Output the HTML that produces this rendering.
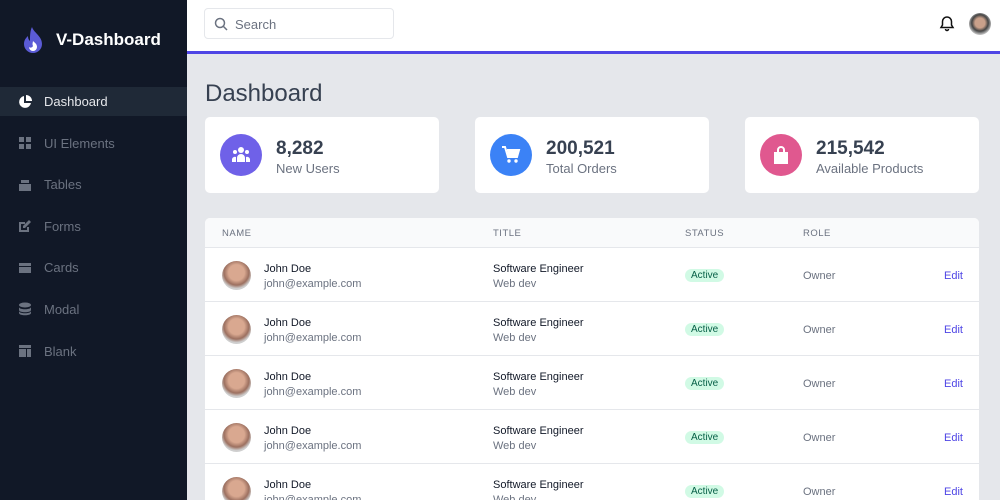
<!DOCTYPE html>
<html><head><meta charset="utf-8"><style>
*{box-sizing:border-box;margin:0;padding:0}
html,body{width:1000px;height:500px;overflow:hidden}
body{font-family:"Liberation Sans",sans-serif;background:#e5e7eb;position:relative}
.side{position:absolute;left:0;top:0;width:187px;height:500px;background:#111827}
.logo{position:absolute;left:22px;top:27px;display:flex;align-items:center}
.logo span{color:#fff;font-weight:bold;font-size:17px;margin-left:12px}
.nav{position:absolute;top:87px;left:0;width:187px}
.nav div{height:29px;margin-bottom:12.6px;display:flex;align-items:center;padding-left:18px;color:#6b7280;font-size:13px}
.nav div.on{background:#1f2937;color:#e5e7eb}
.nav svg{width:14px;height:14px;margin-right:12px;fill:currentColor}
.nav .on svg{fill:#fff}
.top{position:absolute;left:187px;top:0;width:813px;background:#fff;border-bottom:3px solid #4f46e5;height:54px}
.search{position:absolute;left:17px;top:8px;width:190px;height:31px;border:1px solid #e5e7eb;border-radius:4px;font-size:13px;color:#6b7280;padding:8px 0 0 30px}
.search svg{position:absolute;left:9px;top:8px}
h1{position:absolute;left:205px;top:80px;font-weight:normal;font-size:24px;color:#374151}
.card{position:absolute;top:117px;width:234px;height:76px;background:#fff;border-radius:5px}
.card .ic{position:absolute;left:15px;top:17px;width:42px;height:42px;border-radius:50%;display:flex;align-items:center;justify-content:center}
.card b{position:absolute;left:71px;top:21px;font-size:19px;color:#374151;font-weight:bold}
.card i{position:absolute;left:71px;top:44px;font-style:normal;font-size:13px;color:#6b7280}
.tbl{position:absolute;left:205px;top:218px;width:774px;height:282px;background:#fff;border-radius:5px 5px 0 0;overflow:hidden}
.th{height:30px;background:#f9fafb;border-bottom:1px solid #e5e7eb;position:relative;font-size:9.5px;color:#6b7280;letter-spacing:.5px}
.th span,.row span{position:absolute}
.row{height:54px;border-bottom:1px solid #e5e7eb;position:relative;font-size:11px}
.av{position:absolute;left:17px;top:13px;width:29px;height:29px;border-radius:50%;background:radial-gradient(circle at 50% 40%,#d9a890 0 35%,#9c7060 55%,#cfcfcf 70%)}
.n{left:59px;top:15px;color:#111827}.e{left:59px;top:30px;color:#6b7280}
.t1{left:288px;top:15px;color:#111827}.t2{left:288px;top:30px;color:#6b7280}
.st{left:480px;top:21px;background:#d1fae5;color:#065f46;font-size:10px;padding:1px 6px;border-radius:8px}
.ro{left:598px;top:22px;color:#6b7280}
.ed{left:739px;top:22px;color:#4f46e5}
</style></head><body>
<div class="side">
<div class="logo"><svg width="22" height="26" viewBox="0 0 22 26"><path d="M10 0C12 6 20 9 20 17a9 9 0 0 1-18 0c0-4 2-6 4-8 0 3 1 4 2 5C8 9 8 4 10 0z" fill="#5b5bd6"/><path d="M11 14c2 2 4 3 4 6a4 4 0 0 1-8 0c1 1 3 1 4-1-1-2 0-4 0-5z" fill="#fff"/></svg><span>V-Dashboard</span></div>
<div class="nav">
<div class="on"><svg viewBox="0 0 14 14"><path d="M6 1a6 6 0 1 0 7 7H6z"/><path d="M8 0v6h6A6 6 0 0 0 8 0z"/></svg>Dashboard</div>
<div><svg viewBox="0 0 14 14"><rect x="1" y="1" width="5" height="5"/><rect x="8" y="1" width="5" height="5"/><rect x="1" y="8" width="5" height="5"/><rect x="8" y="8" width="5" height="5"/></svg>UI Elements</div>
<div><svg viewBox="0 0 14 14"><rect x="3" y="2" width="8" height="3"/><rect x="1" y="6" width="12" height="7"/></svg>Tables</div>
<div><svg viewBox="0 0 14 14"><path d="M1 3h6v2H3v6h6V8h2v5H1z"/><path d="M11 1l2 2-6 6H5V7z"/></svg>Forms</div>
<div><svg viewBox="0 0 14 14"><rect x="1" y="2" width="12" height="3"/><rect x="1" y="6" width="12" height="6"/></svg>Cards</div>
<div><svg viewBox="0 0 14 14"><ellipse cx="7" cy="3" rx="6" ry="2.5"/><path d="M1 5c0 3 12 3 12 0v3c0 3-12 3-12 0zM1 9c0 3 12 3 12 0v2c0 3-12 3-12 0z"/></svg>Modal</div>
<div><svg viewBox="0 0 14 14"><rect x="1" y="1" width="12" height="3"/><rect x="1" y="5" width="7" height="8"/><rect x="9" y="5" width="4" height="8"/></svg>Blank</div>
</div></div>
<div class="top">
<div class="search"><svg width="14" height="14" viewBox="0 0 14 14"><circle cx="6" cy="6" r="4.5" stroke="#6b7280" stroke-width="1.5" fill="none"/><path d="M9.5 9.5L13 13" stroke="#6b7280" stroke-width="1.5"/></svg>Search</div>
<svg style="position:absolute;left:752px;top:15px" width="16" height="17" viewBox="0 0 16 17"><path d="M8 2a4.5 4.5 0 0 0-4.5 4.5V10L2 12.5h12L12.5 10V6.5A4.5 4.5 0 0 0 8 2z" fill="none" stroke="#111" stroke-width="1.5"/><path d="M6.5 14a1.5 1.5 0 0 0 3 0" fill="none" stroke="#111" stroke-width="1.5"/></svg>
<div style="position:absolute;left:782px;top:13px;width:22px;height:22px;border-radius:50%;background:radial-gradient(circle at 50% 45%,#c9a08a 0 30%,#444 50%,#bbb 70%)"></div>
</div>
<h1>Dashboard</h1>
<div class="card" style="left:205px"><div class="ic" style="background:#6f61e8"><svg width="20" height="18" viewBox="0 0 20 18"><circle cx="10" cy="4" r="3" fill="#fff"/><circle cx="4" cy="6" r="2" fill="#fff"/><circle cx="16" cy="6" r="2" fill="#fff"/><path d="M6 16v-4a4 4 0 0 1 8 0v4zM1 16v-3a3 3 0 0 1 4-2v5zM19 16v-3a3 3 0 0 0-4-2v5z" fill="#fff"/></svg></div><b>8,282</b><i>New Users</i></div>
<div class="card" style="left:475px"><div class="ic" style="background:#3b82f6"><svg width="20" height="20" viewBox="0 0 20 20"><path d="M1 2h3l3 10h9l2-7H6" fill="none" stroke="#fff" stroke-width="2"/><path d="M6 5h12l-2 7H7z" fill="#fff"/><circle cx="8" cy="16" r="1.7" fill="#fff"/><circle cx="15" cy="16" r="1.7" fill="#fff"/></svg></div><b>200,521</b><i>Total Orders</i></div>
<div class="card" style="left:745px"><div class="ic" style="background:#e0588f"><svg width="18" height="20" viewBox="0 0 18 20"><path d="M6 7V5a3 3 0 0 1 6 0v2" fill="none" stroke="#fff" stroke-width="2"/><path d="M2 7h14v12H2z" fill="#fff"/></svg></div><b>215,542</b><i>Available Products</i></div>
<div class="tbl">
<div class="th"><span style="left:17px;top:10px">NAME</span><span style="left:288px;top:10px">TITLE</span><span style="left:480px;top:10px">STATUS</span><span style="left:598px;top:10px">ROLE</span></div>
<div class="row"><div class="av"></div><span class="n">John Doe</span><span class="e">john@example.com</span><span class="t1">Software Engineer</span><span class="t2">Web dev</span><span class="st">Active</span><span class="ro">Owner</span><span class="ed">Edit</span></div>
<div class="row"><div class="av"></div><span class="n">John Doe</span><span class="e">john@example.com</span><span class="t1">Software Engineer</span><span class="t2">Web dev</span><span class="st">Active</span><span class="ro">Owner</span><span class="ed">Edit</span></div>
<div class="row"><div class="av"></div><span class="n">John Doe</span><span class="e">john@example.com</span><span class="t1">Software Engineer</span><span class="t2">Web dev</span><span class="st">Active</span><span class="ro">Owner</span><span class="ed">Edit</span></div>
<div class="row"><div class="av"></div><span class="n">John Doe</span><span class="e">john@example.com</span><span class="t1">Software Engineer</span><span class="t2">Web dev</span><span class="st">Active</span><span class="ro">Owner</span><span class="ed">Edit</span></div>
<div class="row"><div class="av"></div><span class="n">John Doe</span><span class="e">john@example.com</span><span class="t1">Software Engineer</span><span class="t2">Web dev</span><span class="st">Active</span><span class="ro">Owner</span><span class="ed">Edit</span></div>
</div>
</body></html>
